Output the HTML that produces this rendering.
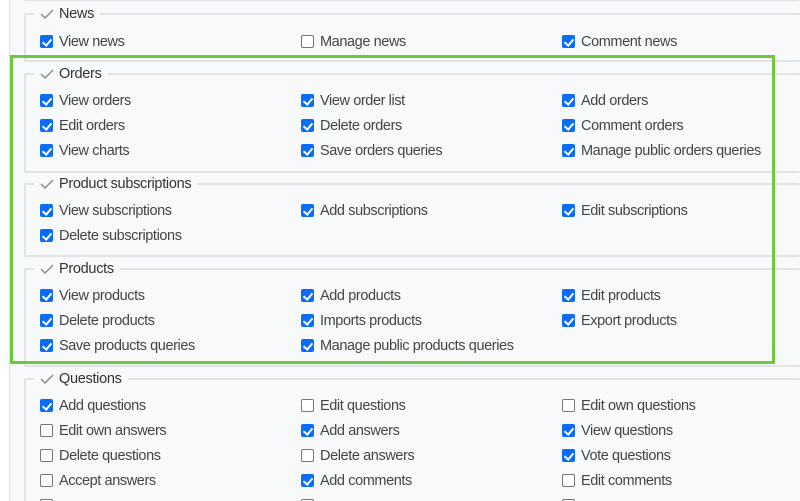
<!DOCTYPE html>
<html><head><meta charset="utf-8"><style>
*{margin:0;padding:0;box-sizing:border-box}
html,body{width:800px;height:501px;overflow:hidden;background:#fff;font-family:"Liberation Sans",sans-serif;position:relative}
#bg{position:absolute;left:9px;top:0;width:791px;height:501px;background:#f8f9fa;border-left:1px solid #dfe2e6}
.fs{position:absolute;left:24px;width:776px;border:2px solid #e0e3e7;border-right:none;border-radius:2px}
.lg{position:absolute;left:34px;height:22px;background:#f8f9fa;padding:0 6px;font-size:14.5px;letter-spacing:-0.3px;color:#333;line-height:22px}
.lg svg{display:inline-block;vertical-align:-1px;margin-right:5px}
.it{position:absolute;font-size:14.5px;letter-spacing:-0.4px;color:#444;line-height:20px;white-space:nowrap;padding-left:19px}
.cb{position:absolute;left:0;top:3px;width:13px;height:13px;border-radius:2px;border:1px solid #767676;background:#fff}
.cb.on{background:#0b6cf5;border-color:#0b6cf5}
.cb.on::after{content:"";position:absolute;left:3px;top:0.5px;width:4px;height:7px;border:solid #fff;border-width:0 2px 2px 0;transform:rotate(40deg)}
#green{position:absolute;left:10px;top:55px;width:765px;height:309px;border:3px solid #6cc83c}
.cl{height:5px;overflow:hidden;color:transparent}
</style></head><body>
<div id="bg"></div>

<div class="fs" style="top:-40px;height:41px"></div>
<div class="fs" style="top:13px;height:49px"></div>
<div class="fs" style="top:73px;height:100px"></div>
<div class="fs" style="top:183px;height:74px"></div>
<div class="fs" style="top:268px;height:99px"></div>
<div class="fs" style="top:378px;height:130px;border-bottom:none"></div>

<div class="lg" style="top:3px"><svg width="14" height="10" viewBox="0 0 14 10"><path d="M1 5 L5 9 L13 1" fill="none" stroke="#888" stroke-width="1.4"/></svg>News</div>
<div class="lg" style="top:63px"><svg width="14" height="10" viewBox="0 0 14 10"><path d="M1 5 L5 9 L13 1" fill="none" stroke="#888" stroke-width="1.4"/></svg>Orders</div>
<div class="lg" style="top:173px"><svg width="14" height="10" viewBox="0 0 14 10"><path d="M1 5 L5 9 L13 1" fill="none" stroke="#888" stroke-width="1.4"/></svg>Product subscriptions</div>
<div class="lg" style="top:258px"><svg width="14" height="10" viewBox="0 0 14 10"><path d="M1 5 L5 9 L13 1" fill="none" stroke="#888" stroke-width="1.4"/></svg>Products</div>
<div class="lg" style="top:368px"><svg width="14" height="10" viewBox="0 0 14 10"><path d="M1 5 L5 9 L13 1" fill="none" stroke="#888" stroke-width="1.4"/></svg>Questions</div>

<div class="it" style="left:40px;top:32px"><span class="cb on"></span>View news</div>
<div class="it" style="left:301px;top:32px"><span class="cb"></span>Manage news</div>
<div class="it" style="left:562px;top:32px"><span class="cb on"></span>Comment news</div>

<div class="it" style="left:40px;top:91px"><span class="cb on"></span>View orders</div>
<div class="it" style="left:301px;top:91px"><span class="cb on"></span>View order list</div>
<div class="it" style="left:562px;top:91px"><span class="cb on"></span>Add orders</div>
<div class="it" style="left:40px;top:116px"><span class="cb on"></span>Edit orders</div>
<div class="it" style="left:301px;top:116px"><span class="cb on"></span>Delete orders</div>
<div class="it" style="left:562px;top:116px"><span class="cb on"></span>Comment orders</div>
<div class="it" style="left:40px;top:141px"><span class="cb on"></span>View charts</div>
<div class="it" style="left:301px;top:141px"><span class="cb on"></span>Save orders queries</div>
<div class="it" style="left:562px;top:141px"><span class="cb on"></span>Manage public orders queries</div>

<div class="it" style="left:40px;top:201px"><span class="cb on"></span>View subscriptions</div>
<div class="it" style="left:301px;top:201px"><span class="cb on"></span>Add subscriptions</div>
<div class="it" style="left:562px;top:201px"><span class="cb on"></span>Edit subscriptions</div>
<div class="it" style="left:40px;top:226px"><span class="cb on"></span>Delete subscriptions</div>

<div class="it" style="left:40px;top:286px"><span class="cb on"></span>View products</div>
<div class="it" style="left:301px;top:286px"><span class="cb on"></span>Add products</div>
<div class="it" style="left:562px;top:286px"><span class="cb on"></span>Edit products</div>
<div class="it" style="left:40px;top:311px"><span class="cb on"></span>Delete products</div>
<div class="it" style="left:301px;top:311px"><span class="cb on"></span>Imports products</div>
<div class="it" style="left:562px;top:311px"><span class="cb on"></span>Export products</div>
<div class="it" style="left:40px;top:336px"><span class="cb on"></span>Save products queries</div>
<div class="it" style="left:301px;top:336px"><span class="cb on"></span>Manage public products queries</div>

<div class="it" style="left:40px;top:396px"><span class="cb on"></span>Add questions</div>
<div class="it" style="left:301px;top:396px"><span class="cb"></span>Edit questions</div>
<div class="it" style="left:562px;top:396px"><span class="cb"></span>Edit own questions</div>
<div class="it" style="left:40px;top:421px"><span class="cb"></span>Edit own answers</div>
<div class="it" style="left:301px;top:421px"><span class="cb on"></span>Add answers</div>
<div class="it" style="left:562px;top:421px"><span class="cb on"></span>View questions</div>
<div class="it" style="left:40px;top:446px"><span class="cb"></span>Delete questions</div>
<div class="it" style="left:301px;top:446px"><span class="cb"></span>Delete answers</div>
<div class="it" style="left:562px;top:446px"><span class="cb on"></span>Vote questions</div>
<div class="it" style="left:40px;top:471px"><span class="cb"></span>Accept answers</div>
<div class="it" style="left:301px;top:471px"><span class="cb on"></span>Add comments</div>
<div class="it" style="left:562px;top:471px"><span class="cb"></span>Edit comments</div>
<div class="it cl" style="left:40px;top:496px"><span class="cb"></span>Edit comments</div>
<div class="it cl" style="left:301px;top:496px"><span class="cb"></span>Delete comments</div>
<div class="it cl" style="left:562px;top:496px"><span class="cb"></span>Delete comments</div>

<div id="green"></div>
</body></html>
